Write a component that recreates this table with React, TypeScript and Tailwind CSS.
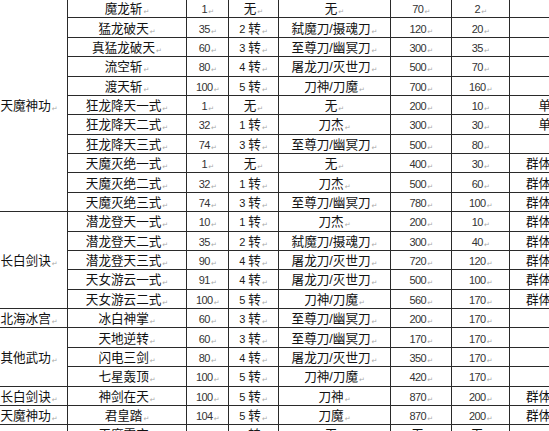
import React from 'react';

/**
 * 武功技能表（截图局部）— 左侧门派合并单元格，右侧最后一列被裁掉一半。
 * 每格末尾带 Word 的段落标记 ↵。
 */

type Skill = {
  name: string;
  lv: string;
  zhuan: string; // '无' 或 '2' 之类（显示为 “2 转”）
  weapon: string;
  a: string;
  b: string;
  kind?: string;
};

type Group = { label: string; span: number };

const ROWS: Skill[] = [
  { name: '魔龙斩', lv: '1', zhuan: '无', weapon: '无', a: '70', b: '2' },
  { name: '猛龙破天', lv: '35', zhuan: '2', weapon: '弑魔刀/摄魂刀', a: '120', b: '20' },
  { name: '真猛龙破天', lv: '60', zhuan: '3', weapon: '至尊刀/幽冥刀', a: '300', b: '35' },
  { name: '流空斩', lv: '80', zhuan: '4', weapon: '屠龙刀/灭世刀', a: '500', b: '70' },
  { name: '渡天斩', lv: '100', zhuan: '5', weapon: '刀神/刀魔', a: '700', b: '160' },
  { name: '狂龙降天一式', lv: '1', zhuan: '无', weapon: '无', a: '200', b: '10', kind: '单体' },
  { name: '狂龙降天二式', lv: '32', zhuan: '1', weapon: '刀杰', a: '300', b: '30', kind: '单体' },
  { name: '狂龙降天三式', lv: '74', zhuan: '3', weapon: '至尊刀/幽冥刀', a: '500', b: '80' },
  { name: '天魔灭绝一式', lv: '1', zhuan: '无', weapon: '无', a: '400', b: '30', kind: '群体攻击' },
  { name: '天魔灭绝二式', lv: '32', zhuan: '1', weapon: '刀杰', a: '500', b: '60', kind: '群体攻击' },
  { name: '天魔灭绝三式', lv: '74', zhuan: '3', weapon: '至尊刀/幽冥刀', a: '780', b: '100', kind: '群体攻击' },
  { name: '潜龙登天一式', lv: '10', zhuan: '1', weapon: '刀杰', a: '200', b: '10', kind: '群体攻击' },
  { name: '潜龙登天二式', lv: '35', zhuan: '2', weapon: '弑魔刀/摄魂刀', a: '300', b: '40', kind: '群体攻击' },
  { name: '潜龙登天三式', lv: '90', zhuan: '4', weapon: '屠龙刀/灭世刀', a: '720', b: '120', kind: '群体攻击' },
  { name: '天女游云一式', lv: '91', zhuan: '4', weapon: '屠龙刀/灭世刀', a: '500', b: '100', kind: '群体攻击' },
  { name: '天女游云二式', lv: '100', zhuan: '5', weapon: '刀神/刀魔', a: '560', b: '170', kind: '群体攻击' },
  { name: '冰白神掌', lv: '60', zhuan: '3', weapon: '至尊刀/幽冥刀', a: '200', b: '170' },
  { name: '天地逆转', lv: '60', zhuan: '3', weapon: '至尊刀/幽冥刀', a: '170', b: '170' },
  { name: '闪电三剑', lv: '80', zhuan: '4', weapon: '屠龙刀/灭世刀', a: '350', b: '170' },
  { name: '七星轰顶', lv: '100', zhuan: '5', weapon: '刀神/刀魔', a: '420', b: '170' },
  { name: '神剑在天', lv: '100', zhuan: '5', weapon: '刀神', a: '870', b: '200', kind: '群体攻击' },
  { name: '君皇踏', lv: '104', zhuan: '5', weapon: '刀魔', a: '870', b: '200', kind: '群体攻击' },
  { name: '天魔霸空', lv: '10', zhuan: '1', weapon: '无', a: '无', b: '无' },
];

// 行号 -> 门派合并格
const GROUPS: Record<number, Group> = {
  0: { label: '天魔神功', span: 11 },
  11: { label: '长白剑诀', span: 5 },
  16: { label: '北海冰宫', span: 1 },
  17: { label: '其他武功', span: 3 },
  20: { label: '长白剑诀', span: 1 },
  21: { label: '天魔神功', span: 1 },
  22: { label: '', span: 1 },
};

const td = 'border border-[#2a2a2a] p-0 text-center align-middle whitespace-nowrap leading-none';

function Mark() {
  return (
    <span className="ml-[1px] inline-block align-[-1px] font-['DejaVu_Sans',sans-serif] text-[7px] text-[#a8a8a8]">
      ↵
    </span>
  );
}

function Han({ children }: { children: React.ReactNode }) {
  return (
    <span className="text-[12.6px] text-[#111]">
      {children}
      <Mark />
    </span>
  );
}

function Num({ children }: { children: React.ReactNode }) {
  return (
    <span className="text-[11px] tracking-[-0.6px] text-[#333]">
      {children}
      <Mark />
    </span>
  );
}

function Zhuan({ v }: { v: string }) {
  if (v === '无') return <Han>无</Han>;
  return (
    <span className="text-[#1a1a1a]">
      <span className="text-[11px]">{v}</span>
      <span className="ml-[3px] text-[12.6px]">转</span>
      <Mark />
    </span>
  );
}

function Cell({ v }: { v: string }) {
  return /^\d+$/.test(v) ? <Num>{v}</Num> : <Han>{v}</Han>;
}

export default function App() {
  return (
    <div className="h-[431px] w-[549px] overflow-hidden bg-white font-['Liberation_Sans','Noto_Sans_CJK_SC',sans-serif]">
      <table className="-ml-[10px] -mt-[2px] w-[609px] table-fixed border-collapse">
        <colgroup>
          <col className="w-[77px]" />
          <col className="w-[119px]" />
          <col className="w-[42px]" />
          <col className="w-[50px]" />
          <col className="w-[112px]" />
          <col className="w-[61px]" />
          <col className="w-[58px]" />
          <col className="w-[90px]" />
        </colgroup>
        <tbody>
          {ROWS.map((r, i) => {
            const g = GROUPS[i];
            return (
              <tr key={i} className="h-[19.38px]">
                {g && (
                  <td rowSpan={g.span} className={td}>
                    {g.label && <Han>{g.label}</Han>}
                  </td>
                )}
                <td className={td}>
                  <Han>{r.name}</Han>
                </td>
                <td className={td}>
                  <Num>{r.lv}</Num>
                </td>
                <td className={td}>
                  <Zhuan v={r.zhuan} />
                </td>
                <td className={td}>
                  <Han>{r.weapon}</Han>
                </td>
                <td className={td}>
                  <Cell v={r.a} />
                </td>
                <td className={td}>
                  <Cell v={r.b} />
                </td>
                <td className={td}>{r.kind ? <Han>{r.kind}</Han> : null}</td>
              </tr>
            );
          })}
        </tbody>
      </table>
    </div>
  );
}
